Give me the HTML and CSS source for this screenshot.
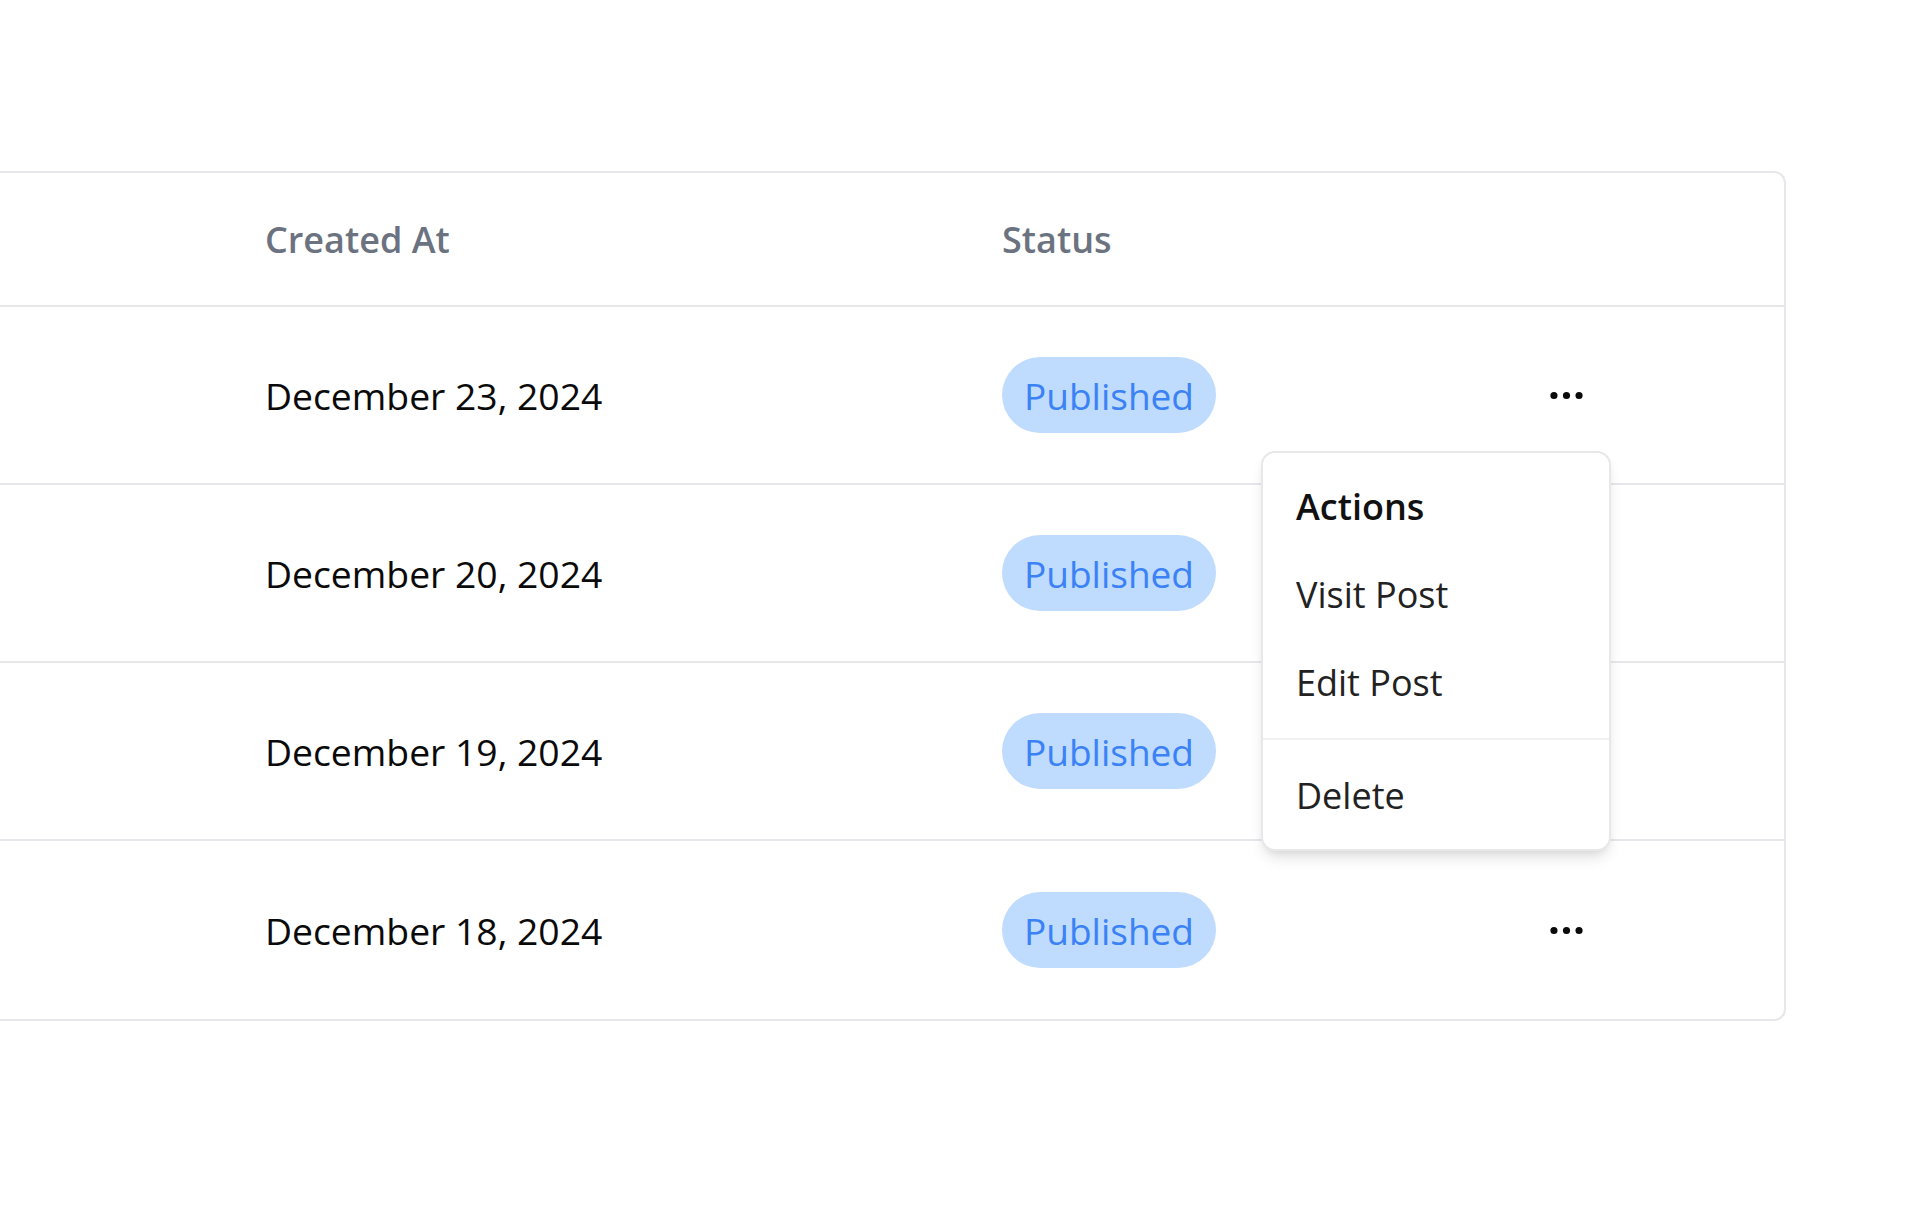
FILE: index.html
```html
<!DOCTYPE html>
<html lang="en">
<head>
<meta charset="utf-8">
<title>Posts</title>
<link rel="stylesheet" href="styles.css">
</head>
<body>
<main class="page">
  <div class="card">
    <div class="row head">
      <div class="cell spacer"></div>
      <div class="cell th">Created At</div>
      <div class="cell th">Status</div>
      <div class="cell"></div>
    </div>
    <div class="row">
      <div class="cell spacer"></div>
      <div class="cell date">December 23, 2024</div>
      <div class="cell"><span class="pill">Published</span></div>
      <div class="cell act"><svg class="dots" viewBox="0 0 24 24" fill="none" stroke="currentColor" stroke-width="2" stroke-linecap="round" stroke-linejoin="round"><circle cx="12" cy="12" r="1"/><circle cx="19" cy="12" r="1"/><circle cx="5" cy="12" r="1"/></svg></div>
    </div>
    <div class="row">
      <div class="cell spacer"></div>
      <div class="cell date">December 20, 2024</div>
      <div class="cell"><span class="pill">Published</span></div>
      <div class="cell act"><svg class="dots" viewBox="0 0 24 24" fill="none" stroke="currentColor" stroke-width="2" stroke-linecap="round" stroke-linejoin="round"><circle cx="12" cy="12" r="1"/><circle cx="19" cy="12" r="1"/><circle cx="5" cy="12" r="1"/></svg></div>
    </div>
    <div class="row">
      <div class="cell spacer"></div>
      <div class="cell date">December 19, 2024</div>
      <div class="cell"><span class="pill">Published</span></div>
      <div class="cell act"><svg class="dots" viewBox="0 0 24 24" fill="none" stroke="currentColor" stroke-width="2" stroke-linecap="round" stroke-linejoin="round"><circle cx="12" cy="12" r="1"/><circle cx="19" cy="12" r="1"/><circle cx="5" cy="12" r="1"/></svg></div>
    </div>
    <div class="row last">
      <div class="cell spacer"></div>
      <div class="cell date">December 18, 2024</div>
      <div class="cell"><span class="pill">Published</span></div>
      <div class="cell act"><svg class="dots" viewBox="0 0 24 24" fill="none" stroke="currentColor" stroke-width="2" stroke-linecap="round" stroke-linejoin="round"><circle cx="12" cy="12" r="1"/><circle cx="19" cy="12" r="1"/><circle cx="5" cy="12" r="1"/></svg></div>
    </div>
  </div>
</main>
<div class="menu" role="menu">
  <div class="menu-label">Actions</div>
  <div class="menu-item">Visit Post</div>
  <div class="menu-item">Edit Post</div>
  <div class="menu-sep"></div>
  <div class="menu-item">Delete</div>
</div>
</body>
</html>
```

FILE: styles.css
```css
* { box-sizing: border-box; }
html, body {
  margin: 0;
  padding: 0;
  background: #ffffff;
  overflow: hidden;
}
body {
  font-family: "Open Sans", "Noto Sans", sans-serif;
  color: #0a0a0a;
  width: 1908px;
  height: 1205px;
  position: relative;
}
.page {
  padding-top: 171px;
}
.card {
  margin-left: -40px;
  width: 1826px;
  border: 2px solid #e5e7eb;
  border-radius: 12px;
}
.row {
  display: grid;
  grid-template-columns: 303px 737px 498px 1fr;
  height: 178px;
  border-bottom: 2px solid #e5e7eb;
  align-items: center;
}
.row.head {
  height: 134px;
}
.row.last {
  border-bottom: none;
  height: 178px;
}
.cell {
  display: flex;
  align-items: center;
}
.th {
  font-size: 36px;
  font-weight: 600;
  color: #6b7280;
}
.date {
  font-size: 37.3px;
  font-weight: 500;
  color: #0a0a0a;
}
.pill {
  display: inline-flex;
  align-items: center;
  height: 76px;
  padding: 0 22px;
  border-radius: 38px;
  background: #bfdbfe;
  color: #3b82f6;
  font-size: 37px;
  font-weight: 500;
}
.act {
  padding-left: 45px;
  color: #0a0a0a;
}
.dots {
  width: 43px;
  height: 43px;
  display: block;
}
.menu {
  position: absolute;
  left: 1261px;
  top: 451px;
  width: 350px;
  padding: 9px 10px 10px;
  background: #ffffff;
  border: 2px solid #e8e8eb;
  border-radius: 14px;
  box-shadow: 0 10px 16px -4px rgba(0,0,0,0.12), 0 4px 8px -4px rgba(0,0,0,0.1);
}
.menu-label,
.menu-item {
  height: 88px;
  display: flex;
  align-items: center;
  padding-left: 23px;
  font-size: 36px;
  color: #222222;
}
.menu-label {
  font-weight: 600;
  color: #111111;
}
.menu-sep {
  height: 2px;
  background: #f1f1f3;
  margin: 12px -10px 11px;
}
```
